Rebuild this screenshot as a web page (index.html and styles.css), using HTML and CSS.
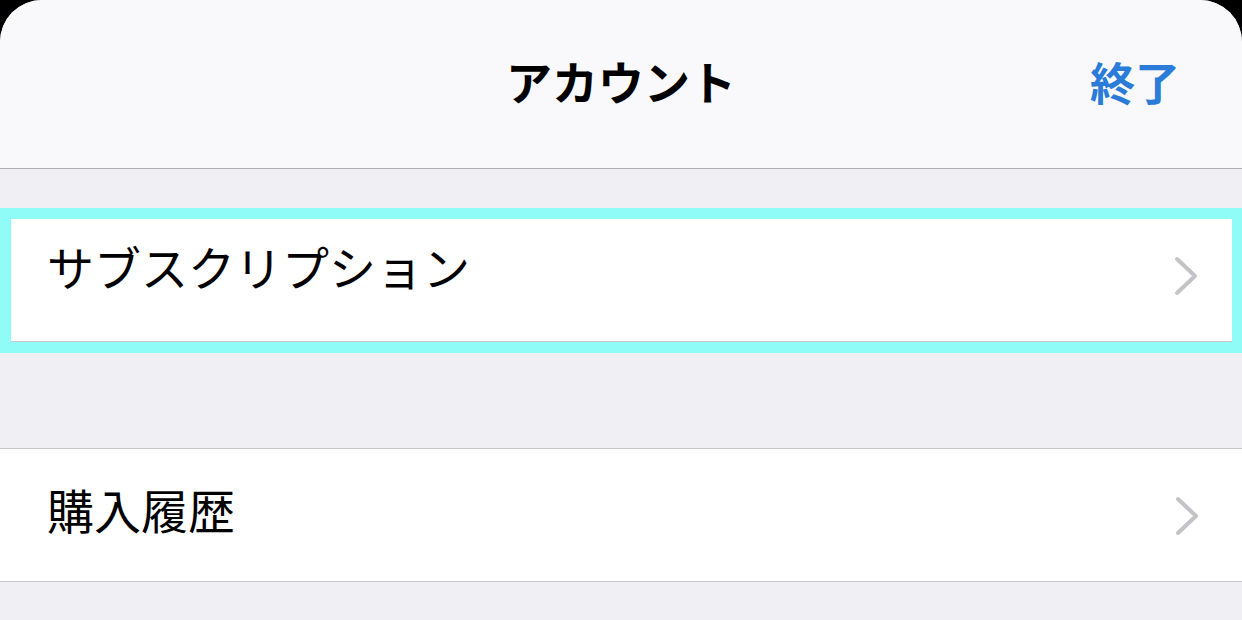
FILE: index.html
```html
<!DOCTYPE html>
<html lang="ja">
<head>
    <meta charset="UTF-8">
    <meta name="viewport" content="width=device-width, initial-scale=1.0">
    <title>アカウント</title>
    <link rel="stylesheet" href="styles.css">
</head>
<body>
    <div class="sheet">
        <header class="nav-bar">
            <h1 class="nav-title">アカウント</h1>
            <button class="nav-done">終了</button>
        </header>

        <div class="spacer-top"></div>

        <div class="row-focus">
            <div class="row row-inner">
                <span class="row-label">サブスクリプション</span>
                <svg class="chevron" width="24" height="40" viewBox="0 0 24 40">
                    <polyline points="3,3 21,20 3,37" fill="none" stroke="#c4c4c8" stroke-width="4" stroke-linecap="round" stroke-linejoin="round"/>
                </svg>
            </div>
        </div>

        <div class="spacer-mid"></div>

        <div class="group">
            <div class="row row-tall">
                <span class="row-label">購入履歴</span>
                <svg class="chevron" width="24" height="40" viewBox="0 0 24 40">
                    <polyline points="3,3 21,20 3,37" fill="none" stroke="#c4c4c8" stroke-width="4" stroke-linecap="round" stroke-linejoin="round"/>
                </svg>
            </div>
        </div>
    </div>
</body>
</html>
```

FILE: styles.css
```css
body {
    margin: 0;
    padding: 0;
    background-color: #000000;
    font-family: "Noto Sans CJK JP", "Noto Sans", sans-serif;
    overflow: hidden;
}
.sheet {
    height: 620px;
    background-color: #efeff4;
    border-radius: 42px 42px 0 0;
    overflow: hidden;
}
.nav-bar {
    height: 168px;
    background-color: #f9f9fb;
    border-bottom: 1px solid #aeaeb2;
    display: flex;
    align-items: center;
    justify-content: center;
    position: relative;
}
.nav-title {
    margin: 0 0 8px 0;
    font-size: 46px;
    font-weight: 700;
    color: #000000;
}
.nav-done {
    position: absolute;
    right: 62px;
    top: 52px;
    padding: 0;
    border: none;
    background: none;
    font-family: inherit;
    font-size: 45px;
    font-weight: 700;
    color: #2b7bd9;
    line-height: 60px;
}
.spacer-top {
    height: 39px;
}
.row-focus {
    border-style: solid;
    border-color: #8ffcf8;
    border-width: 11px 10px 11px 11px;
}
.row {
    background-color: #ffffff;
    display: flex;
    align-items: center;
    justify-content: space-between;
}
.row-inner {
    height: 122px;
    border-bottom: 1px solid #c8c7cc;
    padding: 0 34px 0 36px;
}
.row-inner .row-label {
    margin-top: -30px;
}
.row-inner .chevron {
    margin-top: -8px;
}
.row-label {
    font-size: 47px;
    color: #000000;
}
.spacer-mid {
    height: 95px;
}
.group {
    border-top: 1px solid #c8c7cc;
    border-bottom: 1px solid #c8c7cc;
}
.row-tall {
    height: 132px;
    padding: 0 43px 0 47px;
}
.row-tall .row-label {
    margin-top: -14px;
}
.row-tall .chevron {
    margin-top: 2px;
}
```
